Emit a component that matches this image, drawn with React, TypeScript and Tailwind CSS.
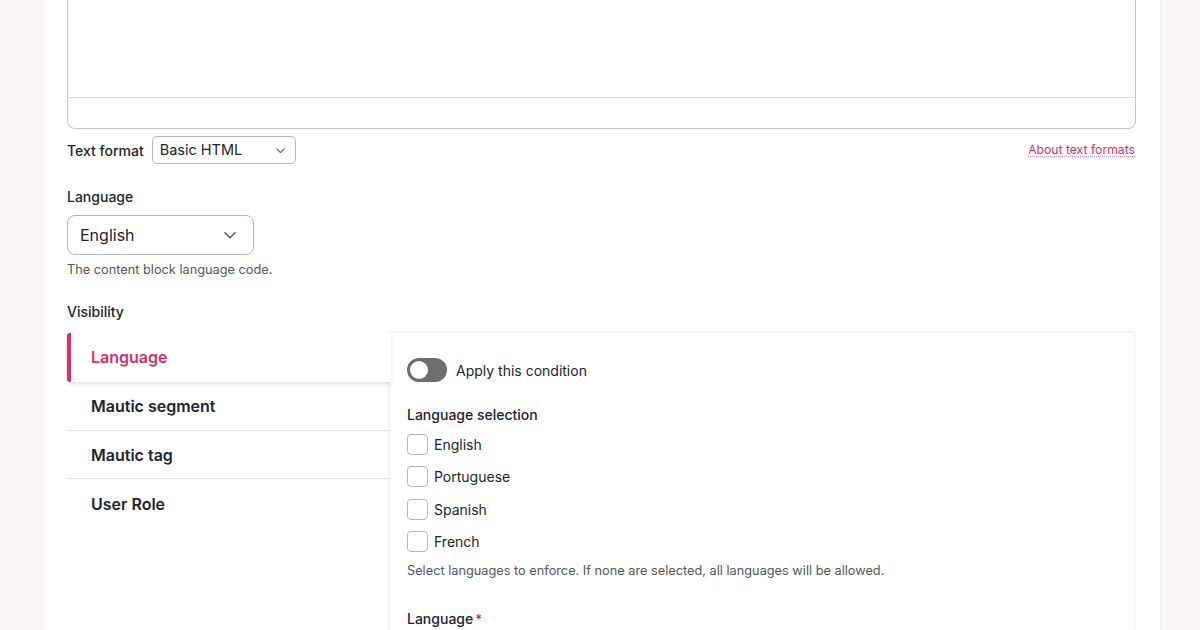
import { useState } from "react";

const tabs = ["Language", "Mautic segment", "Mautic tag", "User Role"];
const languages = ["English", "Portuguese", "Spanish", "French"];

function Chevron({ size = 14 }: { size?: number }) {
  return (
    <svg width={size} height={size} viewBox="0 0 16 16" fill="none">
      <path d="M3.5 6l4.5 4.5L12.5 6" stroke="#545560" strokeWidth="1.3" strokeLinecap="round" strokeLinejoin="round" />
    </svg>
  );
}

export default function App() {
  const [active, setActive] = useState(0);
  const [on, setOn] = useState(false);

  return (
    <div
      className="min-h-screen bg-[#fcf8f9] text-[#222330]"
      style={{ fontFamily: "Inter, 'Noto Sans', sans-serif" }}
    >
      <div className="ml-[43px] w-[1117px] h-[630px] bg-white px-6 shadow-[0_0_3px_rgba(0,0,0,0.06)] overflow-hidden">
        {/* editor body */}
        <div className="h-[129px] border border-t-0 border-[#c6c7cc] rounded-b-[8px] flex flex-col">
          <div className="h-[98px] border-b border-[#dcdde0]" />
        </div>

        {/* text format */}
        <div className="mt-[7px] flex items-center justify-between">
          <div className="flex items-center gap-2">
            <span className="text-[14px] font-medium">Text format</span>
            <div className="w-[144px] h-[28px] border border-[#b5b6bd] rounded-[5px] pl-[7px] pr-[8px] flex items-center justify-between text-[14.5px]">
              Basic HTML
              <Chevron size={13} />
            </div>
          </div>
          <a className="text-[12.2px] text-[#d5306d] underline decoration-dotted decoration-[#e58fae] underline-offset-2 mr-px">
            About text formats
          </a>
        </div>

        {/* language */}
        <div className="mt-[23px] text-[14px] font-medium leading-5">Language</div>
        <div className="mt-2 w-[187px] h-[40px] border border-[#b5b6bd] rounded-[8px] pl-3 pr-[14px] flex items-center justify-between text-[16px]">
          English
          <Chevron size={18} />
        </div>
        <div className="mt-[6px] text-[12.75px] leading-[18px] text-[#55565b]">The content block language code.</div>

        {/* visibility */}
        <div className="mt-[23px] text-[14px] font-medium leading-5">Visibility</div>
        <div className="mt-[11px] flex pr-[2px]">
          <div className="w-[323px] shrink-0 relative z-10">
            {tabs.map((t, i) => (
              <button
                key={t}
                onClick={() => setActive(i)}
                className={
                  i === active
                    ? "w-[324px] h-[49px] flex items-center pl-5 pb-px text-[16px] font-semibold text-[#d5306d] bg-white border-l-4 border-[#d5306d] rounded-l-[3px] shadow-[0_2px_4px_rgba(0,0,0,0.12)] text-left"
                    : "w-full h-[48.5px] flex items-center pl-6 pt-px text-[16px] font-semibold text-left border-b border-[#e4e4e7] last:border-b-0"
                }
              >
                {t}
              </button>
            ))}
          </div>
          <div className="flex-1 bg-white shadow-[0_0_4px_rgba(0,0,0,0.13)] pl-[17px] pt-[25px] min-h-[320px]">
            <div className="flex items-center gap-[9px]">
              <button
                onClick={() => setOn(!on)}
                className={
                  on
                    ? "w-10 h-6 rounded-full bg-[#d5306d] flex items-center justify-end p-[3px]"
                    : "w-10 h-6 rounded-full bg-[#6e6e6e] flex items-center p-[3px]"
                }
              >
                <span className="w-[18px] h-[18px] rounded-full bg-white" />
              </button>
              <span className="text-[14px] pt-px">Apply this condition</span>
            </div>

            <div className="mt-[23px] text-[14px] font-medium leading-5">Language selection</div>
            <div className="mt-[9px] flex flex-col gap-[11.3px]">
              {languages.map((l) => (
                <label key={l} className="flex items-center gap-[6px] h-[21px]">
                  <span className="w-[21px] h-[21px] border border-[#b5b6bd] rounded-[4px] bg-white" />
                  <span className="text-[14px]">{l}</span>
                </label>
              ))}
            </div>
            <div className="mt-[10px] text-[12.75px] leading-[18px] text-[#55565b]">
              Select languages to enforce. If none are selected, all languages will be allowed.
            </div>
            <div className="mt-[29px] text-[14px] font-medium leading-5">
              Language<span className="text-[#dc2323] ml-[2px] align-top text-[13px]">*</span>
            </div>
          </div>
        </div>
      </div>
    </div>
  );
}
